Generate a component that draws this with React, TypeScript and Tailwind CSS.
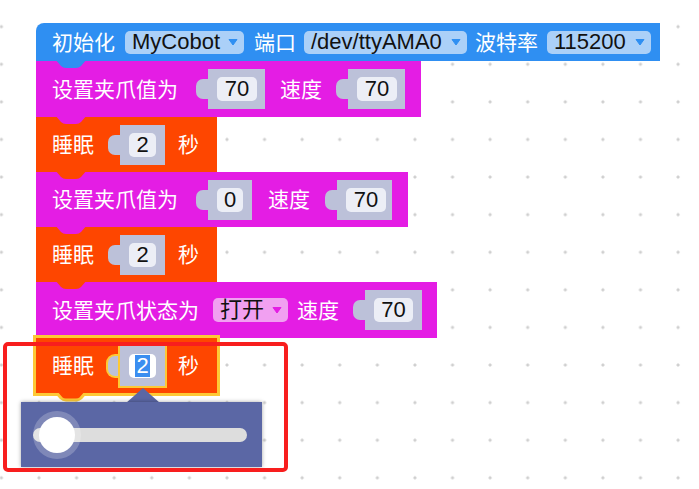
import React from 'react';

type Kids = { children?: React.ReactNode; className?: string };

const Label = ({ children, className = '' }: Kids) => (
  <span className={`shrink-0 text-[21px] leading-none text-white ${className}`}>{children}</span>
);

const Arrow = ({ color }: { color: string }) => (
  <svg width="10" height="8" viewBox="0 0 10 8" className="shrink-0">
    <path d="M1 1.5 L9 1.5 L5 7 Z" fill={color} stroke={color} strokeLinejoin="round" />
  </svg>
);

const Dropdown = ({ children, className = '', arrow }: Kids & { arrow: string }) => (
  <div
    className={`flex h-[23px] shrink-0 items-center justify-between rounded-[5px] pl-[7px] pr-[6px] text-[22px] leading-none text-[#111] ${className}`}
  >
    <span>{children}</span>
    <Arrow color={arrow} />
  </div>
);

// grey value slot with the puzzle tab on its left
const Slot = ({
  children,
  body,
  field,
  selected = false,
}: Kids & { body: string; field: string; selected?: boolean }) => (
  <div className="flex shrink-0 items-center">
    <div
      className={`h-[20px] w-[12px] rounded-l-[7px] bg-[#bcc1d9] ${selected ? 'shadow-[0_0_0_2px_#fdc936]' : ''}`}
    />
    <div
      className={`flex h-[40px] items-center bg-[#bcc1d9] pl-[9px] ${body} ${selected ? 'shadow-[0_0_0_2px_#fdc936]' : ''}`}
    >
      <div
        className={`flex h-[24px] items-center justify-center rounded-[5px] text-[22px] leading-none text-[#111] ${field} ${selected ? 'bg-white' : 'bg-[#eceef6]'}`}
      >
        {children}
      </div>
    </div>
  </div>
);

const Bump = ({ color, stroke }: { color: string; stroke?: string }) => (
  <svg
    width="34"
    height="12"
    viewBox="0 0 34 12"
    className="absolute left-[18px] top-full z-10 -mt-[2px]"
  >
    <path
      d="M1 0 L33 0 L27 7 Q25 9 22 9 L12 9 Q9 9 7 7 Z"
      fill={color}
      stroke={stroke ?? 'none'}
      strokeWidth={stroke ? 3 : 0}
    />
    <rect x="0" y="0" width="34" height="2" fill={color} />
  </svg>
);

const Sleep = ({ selected = false }: { selected?: boolean }) => (
  <div
    className={`relative flex h-[55px] w-[181px] items-center bg-[#fe4600] pl-[16px] ${selected ? 'z-20 h-[54px] shadow-[0_0_0_3px_#fdc936]' : ''}`}
  >
    <Label className="w-[56px]">睡眠</Label>
    <Slot body="w-[45px]" field="w-[27px]" selected={selected}>
      {selected ? <span className="bg-[#3b8ef0] px-[1px] text-white">2</span> : '2'}
    </Slot>
    <Label className="ml-[13px]">秒</Label>
    <Bump color="#fe4600" stroke={selected ? '#fdc936' : undefined} />
  </div>
);

export default function App() {
  return (
    <div className='relative h-[489px] w-[699px] overflow-hidden bg-white bg-[radial-gradient(circle,#cfcfcf_1.2px,transparent_1.9px)] bg-[length:37.6px_37.6px] bg-[position:20.2px_7.9px] font-["Liberation_Sans","Noto_Sans_CJK_SC",sans-serif]'>
      <div className="flex flex-col pl-[36px] pt-[23px]">
        <div className="relative flex h-[38px] w-[624px] items-center rounded-tl-[8px] bg-[#2f8ff2] pl-[16px]">
          <Label className="w-[73px]">初始化</Label>
          <Dropdown className="w-[119px] bg-[#abd0f8]" arrow="#2f8ff2">
            MyCobot
          </Dropdown>
          <Label className="ml-[10px] w-[50px]">端口</Label>
          <Dropdown className="w-[163px] bg-[#abd0f8]" arrow="#2f8ff2">
            /dev/ttyAMA0
          </Dropdown>
          <Label className="ml-[8px] w-[72px]">波特率</Label>
          <Dropdown className="w-[104px] bg-[#abd0f8]" arrow="#2f8ff2">
            115200
          </Dropdown>
          <Bump color="#2f8ff2" />
        </div>

        <div className="relative flex h-[56px] w-[385px] items-center bg-[#e41de4] pl-[16px]">
          <Label className="w-[144px]">设置夹爪值为</Label>
          <Slot body="w-[57px]" field="w-[40px]">70</Slot>
          <Label className="ml-[15px] w-[56px]">速度</Label>
          <Slot body="w-[57px]" field="w-[40px]">70</Slot>
          <Bump color="#e41de4" />
        </div>

        <Sleep />

        <div className="relative flex h-[55px] w-[372px] items-center bg-[#e41de4] pl-[16px]">
          <Label className="w-[144px]">设置夹爪值为</Label>
          <Slot body="w-[44px]" field="w-[26px]">0</Slot>
          <Label className="ml-[16px] w-[57px]">速度</Label>
          <Slot body="w-[55px]" field="w-[40px]">70</Slot>
          <Bump color="#e41de4" />
        </div>

        <Sleep />

        <div className="relative flex h-[56px] w-[401px] items-center bg-[#e41de4] pl-[16px]">
          <Label className="w-[161px]">设置夹爪状态为</Label>
          <Dropdown className="h-[24px] w-[75px] bg-[#f1a0f1] text-[21px]" arrow="#e41de4">
            打开
          </Dropdown>
          <Label className="ml-[9px] w-[56px]">速度</Label>
          <Slot body="w-[57px]" field="w-[39px]">70</Slot>
          <Bump color="#e41de4" />
        </div>

        <Sleep selected />
      </div>

      {/* number slider popup */}
      <svg width="34" height="16" viewBox="0 0 34 16" className="absolute left-[126px] top-[388px] z-30">
        <path d="M0 15 L17 0 L34 15 Z" fill="#5b67a5" />
      </svg>
      <div className="absolute left-[21px] top-[402px] z-30 flex h-[65px] w-[241px] items-center pl-[12px] pr-[15px] bg-[#5b67a5] shadow-[0_0_4px_rgba(0,0,0,0.35)]">
        <div className="relative h-[14px] w-full rounded-full bg-[#dddddd]">
          <div className="absolute left-[6px] top-[-11px] h-[36px] w-[36px] rounded-full bg-white shadow-[0_0_0_6px_rgba(255,255,255,0.22)]" />
        </div>
      </div>

      <div className="absolute left-[3px] top-[342px] z-40 h-[130px] w-[285px] rounded-[5px] border-[4px] border-[#f81e1e]" />
    </div>
  );
}
